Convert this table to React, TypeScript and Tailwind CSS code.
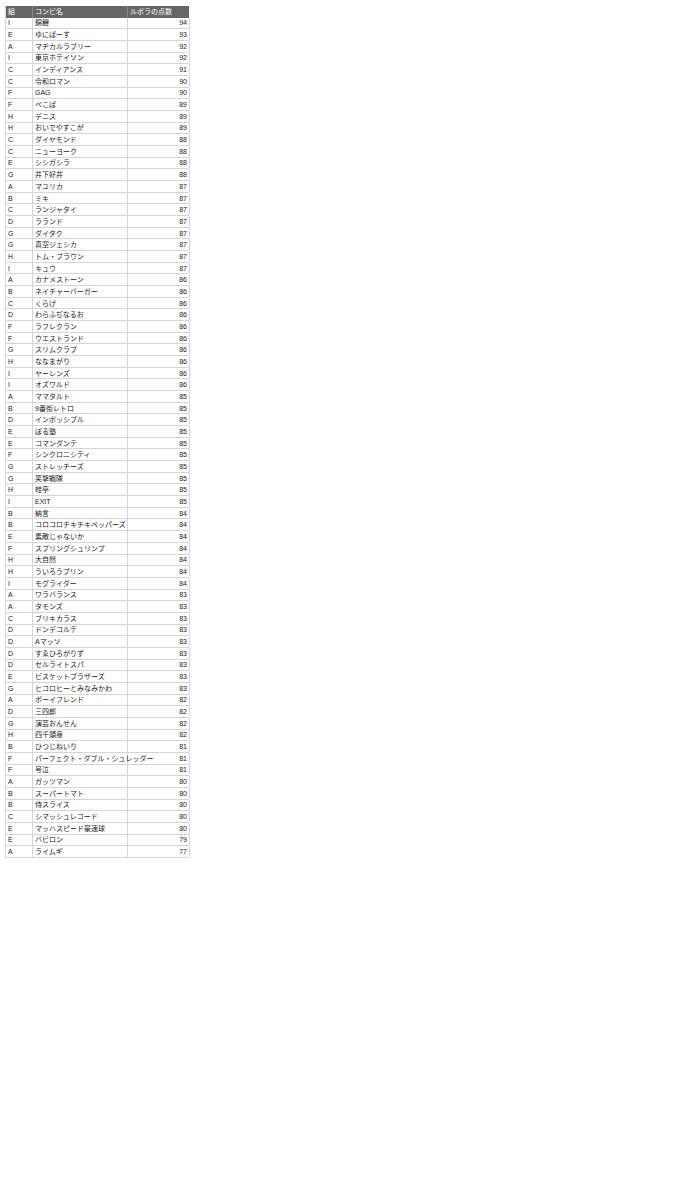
import React from "react";

const rows: [string, string, number][] = [
  ["I", "錦鯉", 94],
  ["E", "ゆにばーす", 93],
  ["A", "マヂカルラブリー", 92],
  ["I", "東京ホテイソン", 92],
  ["C", "インディアンス", 91],
  ["C", "令和ロマン", 90],
  ["F", "GAG", 90],
  ["F", "ぺこぱ", 89],
  ["H", "デニス", 89],
  ["H", "おいでやすこが", 89],
  ["C", "ダイヤモンド", 88],
  ["C", "ニューヨーク", 88],
  ["E", "シシガシラ", 88],
  ["G", "井下好井", 88],
  ["A", "マユリカ", 87],
  ["B", "ミキ", 87],
  ["C", "ランジャタイ", 87],
  ["D", "ラランド", 87],
  ["G", "ダイタク", 87],
  ["G", "真空ジェシカ", 87],
  ["H", "トム・ブラウン", 87],
  ["I", "キュウ", 87],
  ["A", "カナメストーン", 86],
  ["B", "ネイチャーバーガー", 86],
  ["C", "くらげ", 86],
  ["D", "わらふぢなるお", 86],
  ["F", "ラフレクラン", 86],
  ["F", "ウエストランド", 86],
  ["G", "スリムクラブ", 86],
  ["H", "ななまがり", 86],
  ["I", "ヤーレンズ", 86],
  ["I", "オズワルド", 86],
  ["A", "ママタルト", 85],
  ["B", "9番街レトロ", 85],
  ["D", "インポッシブル", 85],
  ["E", "ぼる塾", 85],
  ["E", "コマンダンテ", 85],
  ["F", "シンクロニシティ", 85],
  ["G", "ストレッチーズ", 85],
  ["G", "笑撃戦隊", 85],
  ["H", "蛙亭", 85],
  ["I", "EXIT", 85],
  ["B", "納言", 84],
  ["B", "コロコロチキチキペッパーズ", 84],
  ["E", "素敵じゃないか", 84],
  ["F", "スプリングシュリンプ", 84],
  ["H", "大自然", 84],
  ["H", "ういろうプリン", 84],
  ["I", "モグライダー", 84],
  ["A", "ワラバランス", 83],
  ["A", "タモンズ", 83],
  ["C", "ブリキカラス", 83],
  ["D", "ドンデコルテ", 83],
  ["D", "Aマッソ", 83],
  ["D", "すゑひろがりず", 83],
  ["D", "セルライトスパ", 83],
  ["E", "ビスケットブラザーズ", 83],
  ["G", "ヒコロヒーとみなみかわ", 83],
  ["A", "ボーイフレンド", 82],
  ["D", "三四郎", 82],
  ["G", "演芸おんせん", 82],
  ["H", "四千頭身", 82],
  ["B", "ひつじねいり", 81],
  ["F", "パーフェクト・ダブル・シュレッダー", 81],
  ["F", "号泣", 81],
  ["A", "ガッツマン", 80],
  ["B", "スーパートマト", 80],
  ["B", "侍スライス", 80],
  ["C", "シマッシュレコード", 80],
  ["E", "マッハスピード豪速球", 80],
  ["E", "バビロン", 79],
  ["A", "ライムギ", 77],
];

export default function App() {
  return (
    <div
      className="w-[675px] h-[1200px] bg-white pt-[6px] pl-[5px]"
      style={{ fontFamily: '"Liberation Sans", "Noto Sans CJK JP", sans-serif' }}
    >
      <div className="w-[184px] border-l border-[#d4d4de] text-[7px] leading-none text-[#222]">
        <div className="grid grid-cols-[27px_95px_62px] h-[11.6px] bg-[#666666] text-white">
          <div className="flex items-center pl-[2px] border-r border-[#888]">組</div>
          <div className="flex items-center pl-[2px] border-r border-[#888]">コンビ名</div>
          <div className="flex items-center pl-[2px]">ルポラの点数</div>
        </div>
        {rows.map(([g, n, s], i) => (
          <div
            key={i}
            className="grid grid-cols-[27px_95px_62px] h-[11.68px] border-b border-[#d4d4de]"
          >
            <div className="flex items-center pl-[2px] border-r border-[#d4d4de]">{g}</div>
            <div className="flex items-center pl-[2px] border-r border-[#d4d4de] whitespace-nowrap">{n}</div>
            <div className="flex items-center justify-end pr-[2px] border-r border-[#d4d4de]">{s}</div>
          </div>
        ))}
      </div>
    </div>
  );
}
